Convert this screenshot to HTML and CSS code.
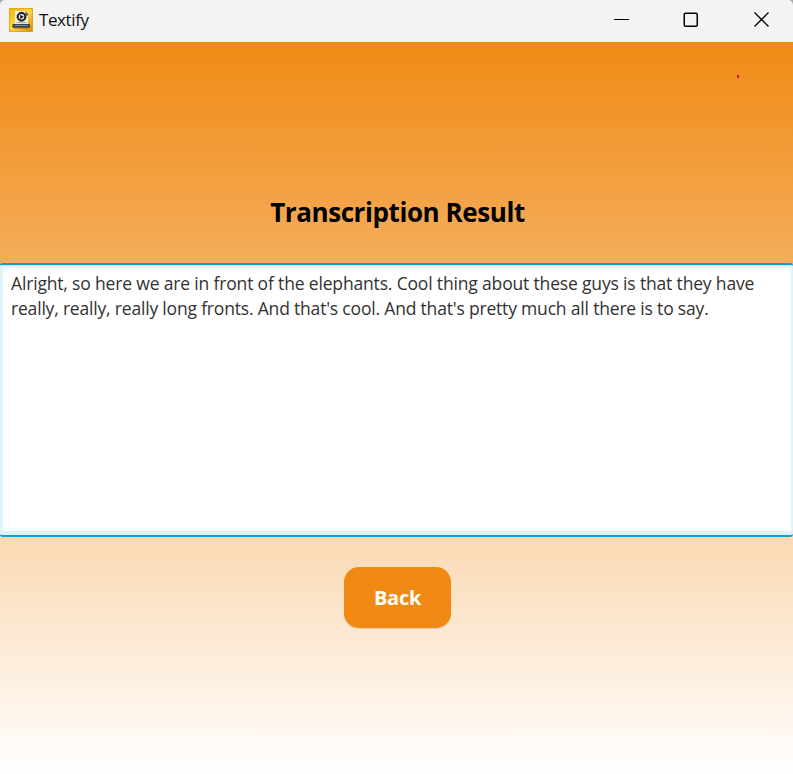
FILE: index.html
```
<!DOCTYPE html>
<html lang="en">
<head>
<meta charset="utf-8">
<title>Textify</title>
<link rel="stylesheet" href="styles.css">
</head>
<body>
<div class="window">
  <header class="titlebar">
    <svg class="app-icon" width="24" height="24" viewBox="0 0 24 24">
      <defs>
        <linearGradient id="gold" x1="0" y1="0" x2="1" y2="1">
          <stop offset="0" stop-color="#f3b70c"/>
          <stop offset=".5" stop-color="#ffd83a"/>
          <stop offset="1" stop-color="#d58a0a"/>
        </linearGradient>
      </defs>
      <rect width="24" height="24" rx="1" fill="#d9a21c"/>
      <rect x=".7" y=".7" width="22.6" height="22.6" rx="3" fill="url(#gold)"/>
      <path d="M6 3h10.5l2.5 3v10H6z" fill="#f4f1e4"/>
      <path d="M16 3l3 3v1.5h-2z" fill="#4c4a3c"/>
      <circle cx="12.5" cy="8.8" r="3.7" fill="#f4f1e4" stroke="#20242e" stroke-width="2"/>
      <circle cx="12.5" cy="8.8" r="4.7" fill="none" stroke="#20242e" stroke-width=".7" stroke-dasharray="1.4 1.2"/>
      <path d="M11.2 6.7l3.6 2.1-3.6 2.1z" fill="#111"/>
      <path d="M7.5 14.7h10" stroke="#8d8b80" stroke-width=".8"/>
      <rect x="3.5" y="16" width="17.5" height="3.8" rx="1" fill="#343c48"/>
      <path d="M5.5 17.4h13.5" stroke="#8a95a0" stroke-width="1"/>
      <path d="M5 20.3h14" stroke="#a0700e" stroke-width=".8"/>
    </svg>
    <span class="app-name">Textify</span>
    <div class="controls">
      <svg width="15" height="16" viewBox="0 0 15 16"><path d="M0 7.5h15" stroke="#000"/></svg>
      <svg width="16" height="16" viewBox="0 0 16 16"><rect x="1.25" y="1.25" width="13" height="13" rx="1.3" fill="none" stroke="#000" stroke-width="1.5"/></svg>
      <svg width="16" height="16" viewBox="0 0 16 16"><path d="M.5.5l14 14M14.5.5l-14 14" stroke="#000" stroke-width="1.3"/></svg>
    </div>
  </header>
  <main class="content">
    <span class="dot"></span>
    <h1 class="heading">Transcription Result</h1>
    <div class="result">
      <div class="line line-one">Alright, so here we are in front of the elephants. Cool thing about these guys is that they have</div>
      <div class="line line-two">really, really, really long fronts. And that's cool. And that's pretty much all there is to say.</div>
    </div>
    <button class="back">Back</button>
  </main>
</div>
</body>
</html>
```

FILE: styles.css
```
* { box-sizing: border-box; }
body {
  margin: 0;
  background: #a9a9a9;
  font-family: "Open Sans", "Noto Sans", sans-serif;
}
.window {
  display: flex;
  flex-direction: column;
  height: 774px;
  overflow: hidden;
}
.titlebar {
  display: flex;
  align-items: center;
  height: 42px;
  padding: 0 23px 3px 9px;
  background: #f3f3f3;
  border-radius: 5px 5px 0 0;
}
.app-name {
  margin-left: 6px;
  font-size: 17px;
  letter-spacing: -0.4px;
  color: #111;
}
.controls {
  display: flex;
  margin-left: auto;
}
.controls svg { margin-left: 55px; }
.controls svg:nth-child(2) { margin-left: 54px; }
.content {
  position: relative;
  flex: 1;
  display: flex;
  flex-direction: column;
  align-items: center;
  background: linear-gradient(#f08a14, #fff);
}
.dot {
  position: absolute;
  left: 737px;
  top: 33px;
  width: 2px;
  height: 3px;
  background: #c01850;
}
.heading {
  margin: 152px 0 0 2px;
  height: 69px;
  line-height: 37px;
  font-size: 26px;
  font-weight: 700;
  letter-spacing: -0.42px;
  white-space: nowrap;
  color: #000;
}
.result {
  width: 793px;
  height: 274px;
  padding: 6px 11px;
  border: 2px solid #0f9fd0;
  border-width: 2px 0;
  border-radius: 3px;
  background: #fff;
  box-shadow: inset 3px 0 #def2fb, inset -2px 0 #def2fb, inset 0 -4px #def2fb, inset 0 1px #c5e6f3, inset 0 5px 5px -2px #e8e8e8;
}
.line {
  height: 25px;
  line-height: 25px;
  font-size: 17.5px;
  white-space: nowrap;
  width: max-content;
  color: #323232;
}
.line-one { letter-spacing: -0.165px; }
.line-two { letter-spacing: -0.185px; }
.back {
  width: 107px;
  height: 61px;
  margin: 30px 0 0 2px;
  padding: 0;
  border: 0;
  border-radius: 15px;
  background: #f08a14;
  box-shadow: 0 1px 1px #e9c8a2;
  color: #fff;
  font: 700 20px/61px "Open Sans", "Noto Sans", sans-serif;
  letter-spacing: -0.3px;
}
```
